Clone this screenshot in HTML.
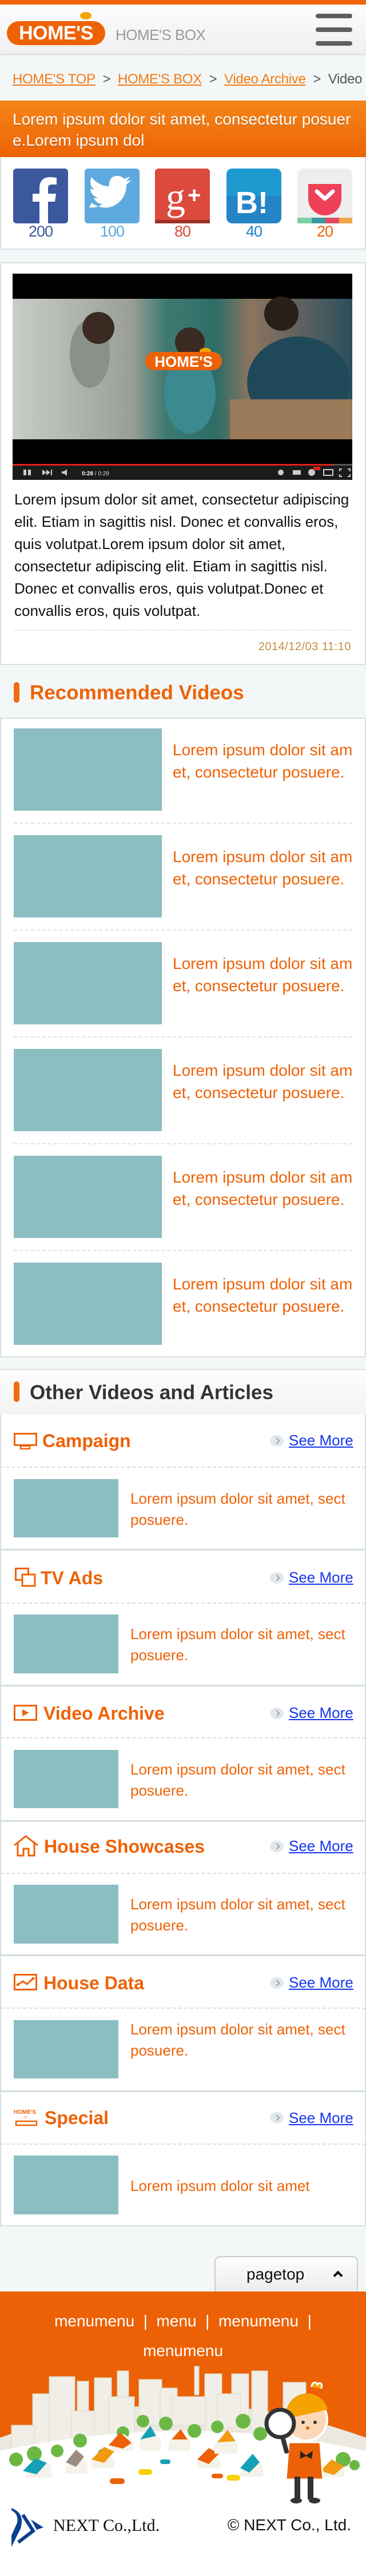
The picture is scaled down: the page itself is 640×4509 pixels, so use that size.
<!DOCTYPE html>
<html><head><meta charset="utf-8">
<style>
*{margin:0;padding:0;box-sizing:border-box}
body{width:640px;height:4509px;position:relative;background:#f4f7f8;font-family:"Liberation Sans",Arial,sans-serif;overflow:hidden}
.a{position:absolute}
.box{position:absolute;left:0;width:640px;background:#fff;border:2px solid #d8e0e3}
.thumb{position:absolute;background:#8bbec1}
.rt{position:absolute;left:302px;color:#ee6207;font-size:28px;line-height:39px;white-space:nowrap}
.ct{position:absolute;left:228px;color:#ee6207;font-size:26px;line-height:37px;white-space:nowrap}
.dash{position:absolute;left:24px;width:592px;border-top:2px dashed #dde3e5}
.dash2{position:absolute;left:0;width:640px;border-top:2px dashed #d6dfe2}
.sol{position:absolute;left:0;width:640px;border-top:3px solid #d3dde0}
.cat{position:absolute;left:24px;color:#ee6207;font-weight:bold;font-size:32px;line-height:40px;white-space:nowrap}
.see{position:absolute;left:505px;color:#1636f0;font-size:26px;line-height:30px;text-decoration:underline}
.arr{position:absolute;left:472px;width:24px;height:20px;border-radius:50%;background:#e1e8ee}
.arr:after{content:"";position:absolute;left:8px;top:6px;width:6px;height:6px;border-top:2px solid #9aa4ab;border-right:2px solid #9aa4ab;transform:rotate(45deg)}
.cnt{position:absolute;top:390px;width:96px;text-align:center;font-size:27px;letter-spacing:-1px}
</style></head><body>
<!-- top bar -->
<div class="a" style="left:0;top:0;width:640px;height:8px;background:#ef6207"></div>
<div class="a" style="left:0;top:8px;width:640px;height:89px;background:linear-gradient(#fdfdfd,#efefef);border-bottom:3px solid #dfe3e5"></div>
<div class="a" style="left:140px;top:21px;width:20px;height:13px;border-radius:50%;background:#f5a300"></div>
<div class="a" style="left:12px;top:37px;width:172px;height:42px;border-radius:22px;background:#ee6207;color:#fff;font-weight:bold;font-size:34px;line-height:42px;text-align:center;letter-spacing:-0.5px">HOME'S</div>
<div class="a" style="left:202px;top:45px;font-size:26px;color:#9a9a9a;letter-spacing:-0.5px;line-height:32px">HOME'S BOX</div>
<div class="a" style="left:552px;top:24px;width:64px;height:8px;border-radius:4px;background:#5e5e5e"></div>
<div class="a" style="left:552px;top:48px;width:64px;height:8px;border-radius:4px;background:#5e5e5e"></div>
<div class="a" style="left:552px;top:72px;width:64px;height:8px;border-radius:4px;background:#5e5e5e"></div>
<!-- breadcrumb -->
<div class="a" style="left:22px;top:124px;font-size:24px;line-height:30px;white-space:nowrap;color:#555;letter-spacing:-0.3px">
<span style="color:#f47a12;text-decoration:underline">HOME'S TOP</span>&nbsp; &gt; &nbsp;<span style="color:#f47a12;text-decoration:underline">HOME'S BOX</span>&nbsp; &gt; &nbsp;<span style="color:#f47a12;text-decoration:underline">Video Archive</span>&nbsp; &gt; &nbsp;Video</div>
<!-- banner -->
<div class="a" style="left:0;top:176px;width:640px;height:99px;background:linear-gradient(#f58618,#ec6305);color:#fff;font-size:28px;line-height:37px;padding:14px 0 0 22px;text-shadow:0 1px 1px rgba(0,0,0,.3);white-space:nowrap">Lorem ipsum dolor sit amet, consectetur posuer<br>e.Lorem ipsum dol</div>
<!-- social -->
<div class="box" style="top:275px;height:162px;border-top:none"></div>
<svg class="a" style="left:0;top:295px" width="640" height="100">
<rect x="23" y="0" width="96" height="96" rx="6" fill="#3b579d"/>
<path d="M84 96V58h12l2-14H84v-9c0-4 1-7 7-7h8V16c-2 0-7-1-12-1-11 0-18 7-18 19v10H57v14h12v38z" fill="#fff"/>
<rect x="148" y="0" width="96" height="96" rx="6" fill="#5ea9dd"/>
<path d="M160 60c8 6 20 10 30 8 20-4 32-22 31-40 3-2 6-5 8-8-3 1-6 2-9 2 3-2 6-5 7-8-3 2-6 3-10 4-6-7-18-7-23 0-3 4-4 9-3 13-13 0-24-7-31-16-4 8-2 17 5 22-3 0-5-1-7-2 0 8 6 14 13 16-2 1-5 1-7 0 2 6 8 11 15 11-6 5-14 7-23 6z" fill="#fff"/>
<rect x="271" y="0" width="96" height="96" rx="6" fill="#dc4a3d"/><rect x="271" y="90" width="96" height="6" fill="#9c2f26"/>
<text x="290" y="72" font-family="Liberation Serif,serif" font-size="68" fill="#fff">g</text>
<text x="328" y="60" font-family="Liberation Sans,sans-serif" font-size="40" font-weight="bold" fill="#fff">+</text>
<rect x="396" y="0" width="96" height="96" rx="10" fill="#2584c6"/><path d="M396 48V10a10 10 0 0 1 10-10h76a10 10 0 0 1 10 10v38z" fill="#1f9ad0"/>
<text x="412" y="78" font-family="Liberation Sans,sans-serif" font-size="54" font-weight="bold" fill="#fff">B!</text>
<rect x="520" y="0" width="96" height="96" rx="10" fill="#eeeeee"/>
<rect x="520" y="86" width="25" height="10" fill="#7fd0a6"/><rect x="545" y="86" width="24" height="10" fill="#3a9aa0"/><rect x="569" y="86" width="24" height="10" fill="#e54960"/><rect x="593" y="86" width="23" height="10" fill="#efa845"/>
<path d="M539 27h58v26a29 29 0 0 1-58 0z" fill="#ee4056"/>
<path d="M554 40l14 13 14-13" stroke="#fff" stroke-width="7" fill="none" stroke-linecap="round" stroke-linejoin="round"/>
</svg>
<div class="cnt" style="left:23px;color:#3b579d">200</div>
<div class="cnt" style="left:148px;color:#5ea9dd">100</div>
<div class="cnt" style="left:271px;color:#dc4a3d">80</div>
<div class="cnt" style="left:396px;color:#2584c6">40</div>
<div class="cnt" style="left:520px;color:#ee6207">20</div>
<!-- video box -->
<div class="box" style="top:459px;height:705px"></div>
<svg class="a" style="left:22px;top:479px" width="594" height="361">
<rect width="594" height="361" fill="#000"/>
<defs><linearGradient id="g1" x1="0" x2="1"><stop offset="0" stop-color="#c9cdc8"/><stop offset=".35" stop-color="#9a9f96"/><stop offset=".45" stop-color="#3f7a72"/><stop offset=".6" stop-color="#2d6d66"/><stop offset=".7" stop-color="#8d7460"/><stop offset="1" stop-color="#2c4f5c"/></linearGradient></defs>
<rect x="0" y="44" width="594" height="246" fill="url(#g1)"/>
<ellipse cx="135" cy="140" rx="35" ry="60" fill="#8a918a"/><circle cx="150" cy="95" r="28" fill="#3a2a22"/>
<ellipse cx="310" cy="210" rx="45" ry="70" fill="#3a8a90"/><circle cx="310" cy="120" r="26" fill="#3a2a22"/>
<ellipse cx="500" cy="190" rx="90" ry="80" fill="#1f4858"/><circle cx="470" cy="70" r="30" fill="#2a1e18"/>
<rect x="380" y="220" width="214" height="70" fill="#9a7a58"/>
<ellipse cx="337" cy="136" rx="10" ry="6" fill="#f5a300"/>
<rect x="232" y="137" width="134" height="32" rx="16" fill="#ee6207"/>
<text x="299" y="163" text-anchor="middle" font-family="Liberation Sans,sans-serif" font-weight="bold" font-size="26" fill="#fff">HOME'S</text>
<rect x="0" y="335" width="594" height="26" fill="#1b1b1b"/>
<rect x="0" y="333" width="560" height="3" fill="#e0201a"/><rect x="560" y="333" width="34" height="3" fill="#555"/>
<rect x="19" y="343" width="5" height="10" fill="#ccc"/><rect x="27" y="343" width="5" height="10" fill="#ccc"/>
<path d="M52 343l7 5-7 5zM59 343l7 5-7 5z" fill="#ccc"/><rect x="67" y="343" width="2" height="10" fill="#ccc"/>
<path d="M86 346h4l5-4v12l-5-4h-4z" fill="#ccc"/>
<text x="121" y="353" font-family="Liberation Sans,sans-serif" font-size="10" fill="#ddd"><tspan font-weight="bold" fill="#fff">0:28</tspan> / 0:29</text>
<circle cx="469" cy="348" r="5" fill="#ccc"/><rect x="490" y="344" width="14" height="8" fill="#ccc"/>
<circle cx="523" cy="348" r="6" fill="#ccc"/><rect x="526" y="338" width="12" height="6" fill="#e0201a"/>
<rect x="544" y="343" width="16" height="10" fill="none" stroke="#ccc" stroke-width="2"/>
<path d="M572 346v-4h4M586 342h4v4M590 351v4h-4M576 355h-4v-4" stroke="#ccc" stroke-width="2" fill="none"/>
</svg>
<div class="a" style="left:25px;top:855px;font-size:26px;line-height:39px;color:#111;white-space:nowrap">Lorem ipsum dolor sit amet, consectetur adipiscing<br>elit. Etiam in sagittis nisl. Donec et convallis eros,<br>quis volutpat.Lorem ipsum dolor sit amet,<br>consectetur adipiscing elit. Etiam in sagittis nisl.<br>Donec et convallis eros, quis volutpat.Donec et<br>convallis eros, quis volutpat.</div>
<div class="a" style="left:25px;top:1102px;width:590px;border-top:2px dotted #dedede"></div>
<div class="a" style="right:26px;top:1121px;font-size:20px;color:#c48a45;letter-spacing:0.5px">2014/12/03 11:10</div>
<!-- recommended -->
<div class="a" style="left:24px;top:1194px;width:10px;height:36px;border-radius:5px;background:#f26a12"></div>
<div class="a" style="left:52px;top:1191px;font-size:35px;font-weight:bold;color:#ee6207;line-height:44px">Recommended Videos</div>
<div class="box" style="top:1256px;height:1120px"></div>
<div class="thumb" style="left:24px;top:1275px;width:259px;height:144px"></div><div class="rt" style="top:1293px">Lorem ipsum dolor sit am<br>et, consectetur posuere.</div><div class="dash" style="top:1440px"></div>
<div class="thumb" style="left:24px;top:1462px;width:259px;height:144px"></div><div class="rt" style="top:1480px">Lorem ipsum dolor sit am<br>et, consectetur posuere.</div><div class="dash" style="top:1627px"></div>
<div class="thumb" style="left:24px;top:1649px;width:259px;height:144px"></div><div class="rt" style="top:1667px">Lorem ipsum dolor sit am<br>et, consectetur posuere.</div><div class="dash" style="top:1814px"></div>
<div class="thumb" style="left:24px;top:1836px;width:259px;height:144px"></div><div class="rt" style="top:1854px">Lorem ipsum dolor sit am<br>et, consectetur posuere.</div><div class="dash" style="top:2001px"></div>
<div class="thumb" style="left:24px;top:2023px;width:259px;height:144px"></div><div class="rt" style="top:2041px">Lorem ipsum dolor sit am<br>et, consectetur posuere.</div><div class="dash" style="top:2188px"></div>
<div class="thumb" style="left:24px;top:2210px;width:259px;height:144px"></div><div class="rt" style="top:2228px">Lorem ipsum dolor sit am<br>et, consectetur posuere.</div>
<!-- other -->
<div class="a" style="left:0;top:2396px;width:640px;height:80px;background:linear-gradient(#fdfdfd,#f3f3f3);border-top:2px solid #d8e0e3"></div>
<div class="a" style="left:24px;top:2418px;width:10px;height:36px;border-radius:5px;background:#f26a12"></div>
<div class="a" style="left:52px;top:2416px;font-size:35px;font-weight:bold;color:#333;line-height:44px">Other Videos and Articles</div>
<div class="box" style="top:2476px;height:1421px;border-top:none"></div>

<!-- section template offsets: start S, header center S+46, dashed S+91, thumb S+113 -->
<!-- Campaign S=2476 -->
<svg class="a" style="left:24px;top:2508px" width="42" height="30"><rect x="1.5" y="1.5" width="38" height="20" fill="none" stroke="#ee6207" stroke-width="3"/><rect x="12" y="23" width="16" height="5" fill="none" stroke="#ee6207" stroke-width="2.5"/></svg>
<div class="cat" style="left:74px;top:2502px">Campaign</div>
<div class="arr" style="top:2512px"></div><div class="see" style="top:2506px">See More</div>
<div class="dash2" style="top:2567px"></div>
<div class="thumb" style="left:24px;top:2589px;width:183px;height:102px"></div>
<div class="ct" style="top:2605px">Lorem ipsum dolor sit amet, sect<br>posuere.</div>
<div class="sol" style="top:2711px"></div>
<!-- TV Ads S=2712 -->
<svg class="a" style="left:26px;top:2744px" width="40" height="36"><rect x="1.5" y="1.5" width="22" height="20" fill="none" stroke="#ee6207" stroke-width="3"/><rect x="13" y="12" width="22" height="20" fill="#fff" stroke="#ee6207" stroke-width="3"/></svg>
<div class="cat" style="left:71px;top:2742px">TV Ads</div>
<div class="arr" style="top:2752px"></div><div class="see" style="top:2746px">See More</div>
<div class="dash2" style="top:2805px"></div>
<div class="thumb" style="left:24px;top:2826px;width:183px;height:103px"></div>
<div class="ct" style="top:2842px">Lorem ipsum dolor sit amet, sect<br>posuere.</div>
<div class="sol" style="top:2949px"></div>
<!-- Video Archive S=2950 -->
<svg class="a" style="left:24px;top:2984px" width="44" height="30"><rect x="1.5" y="1.5" width="38" height="25" fill="none" stroke="#ee6207" stroke-width="3"/><path d="M15 8l12 6-12 6z" fill="#ee6207"/></svg>
<div class="cat" style="left:76px;top:2979px">Video Archive</div>
<div class="arr" style="top:2989px"></div><div class="see" style="top:2983px">See More</div>
<div class="dash2" style="top:3041px"></div>
<div class="thumb" style="left:24px;top:3063px;width:183px;height:102px"></div>
<div class="ct" style="top:3079px">Lorem ipsum dolor sit amet, sect<br>posuere.</div>
<div class="sol" style="top:3186px"></div>
<!-- House Showcases S=3187 -->
<svg class="a" style="left:23px;top:3211px" width="46" height="40"><path d="M2 19L22 3l21 16M8 15v22h10V25h9v12h10V15" fill="none" stroke="#ee6207" stroke-width="3"/></svg>
<div class="cat" style="left:77px;top:3212px">House Showcases</div>
<div class="arr" style="top:3222px"></div><div class="see" style="top:3216px">See More</div>
<div class="dash2" style="top:3278px"></div>
<div class="thumb" style="left:24px;top:3299px;width:183px;height:103px"></div>
<div class="ct" style="top:3315px">Lorem ipsum dolor sit amet, sect<br>posuere.</div>
<div class="sol" style="top:3421px"></div>
<!-- House Data S=3422 -->
<svg class="a" style="left:24px;top:3455px" width="44" height="32"><rect x="1.5" y="1.5" width="38" height="26" fill="none" stroke="#ee6207" stroke-width="3"/><path d="M7 19l9-6 7 5 11-10" fill="none" stroke="#ee6207" stroke-width="3"/><circle cx="7" cy="19" r="2.5" fill="#ee6207"/><circle cx="34" cy="8" r="2.5" fill="#ee6207"/></svg>
<div class="cat" style="left:76px;top:3451px">House Data</div>
<div class="arr" style="top:3461px"></div><div class="see" style="top:3455px">See More</div>
<div class="dash2" style="top:3514px"></div>
<div class="thumb" style="left:24px;top:3536px;width:183px;height:102px"></div>
<div class="ct" style="top:3534px">Lorem ipsum dolor sit amet, sect<br>posuere.</div>
<div class="sol" style="top:3659px"></div>
<!-- Special S=3660 -->
<svg class="a" style="left:24px;top:3690px" width="48" height="36"><text x="0" y="10" font-family="Liberation Sans,sans-serif" font-weight="bold" font-size="10" fill="#ee6207">HOME'S</text><text x="18" y="19" font-family="Liberation Sans,sans-serif" font-size="9" fill="#ee6207">×</text><rect x="4" y="23" width="36" height="7" fill="none" stroke="#ee6207" stroke-width="2.5"/></svg>
<div class="cat" style="left:78px;top:3687px">Special</div>
<div class="arr" style="top:3697px"></div><div class="see" style="top:3692px">See More</div>
<div class="dash2" style="top:3752px"></div>
<div class="thumb" style="left:24px;top:3773px;width:183px;height:103px"></div>
<div class="ct" style="top:3808px">Lorem ipsum dolor sit amet</div>

<!-- pagetop -->
<div class="a" style="left:375px;top:3949px;width:251px;height:64px;border:2px solid #c9cdd0;border-bottom:none;border-radius:10px 10px 0 0;background:linear-gradient(#fdfdfd,#ececec)"></div>
<div class="a" style="left:431px;top:3965px;font-size:28px;color:#111">pagetop</div>
<div class="a" style="left:585px;top:3977px;width:12px;height:12px;border-top:4px solid #111;border-left:4px solid #111;transform:rotate(45deg)"></div>
<!-- footer -->
<div class="a" style="left:0;top:4011px;width:640px;height:498px;background:#fff"></div>
<div class="a" style="left:0;top:4011px;width:640px;height:260px;background:#ec6105"></div>
<div class="a" style="left:0;top:4037px;width:640px;text-align:center;color:#fff;font-size:28px;line-height:52px">menumenu &nbsp;| &nbsp;menu &nbsp;| &nbsp;menumenu &nbsp;|<br>menumenu</div>
<svg class="a" style="left:0;top:4130px" width="640" height="260">
<path d="M0 137 Q320 20 640 137 V260 H0z" fill="#ece9e0"/>
<g fill="#f0eee6" stroke="#dcd8cc" stroke-width="1">
<rect x="57" y="60" width="30" height="90"/><rect x="86" y="30" width="45" height="120"/><rect x="135" y="38" width="20" height="100"/><rect x="165" y="32" width="30" height="110"/><rect x="205" y="20" width="20" height="90"/><rect x="243" y="35" width="40" height="80"/><rect x="280" y="50" width="30" height="60"/><rect x="340" y="12" width="8" height="50"/><rect x="358" y="25" width="30" height="110"/><rect x="405" y="25" width="30" height="100"/><rect x="440" y="20" width="28" height="110"/><rect x="495" y="40" width="40" height="90"/><rect x="20" y="115" width="40" height="40"/><rect x="125" y="90" width="40" height="60"/><rect x="190" y="65" width="45" height="70"/><rect x="300" y="65" width="60" height="50"/><rect x="380" y="60" width="40" height="60"/>
</g>
<path d="M0 160 Q320 90 640 160 V260 H0z" fill="#fff"/>
<g fill="#6cb845"><circle cx="28" cy="175" r="12"/><circle cx="60" cy="165" r="13"/><circle cx="100" cy="160" r="11"/><circle cx="140" cy="142" r="12"/><circle cx="215" cy="128" r="11"/><circle cx="250" cy="108" r="11"/><circle cx="290" cy="112" r="12"/><circle cx="340" cy="125" r="12"/><circle cx="380" cy="118" r="11"/><circle cx="425" cy="108" r="13"/><circle cx="455" cy="130" r="12"/><circle cx="600" cy="175" r="13"/><circle cx="620" cy="185" r="9"/><circle cx="180" cy="165" r="9"/></g>
<g><path d="M45 195l20-20 25 10v22H45z" fill="#f5f2ea"/><path d="M40 195l22-22 20 8-18 20z" fill="#16a0b6"/>
<path d="M115 190l18-25 20 15v20h-38z" fill="#f5f2ea"/><path d="M115 180l18-22 14 12-14 18z" fill="#9b8b80"/>
<path d="M160 180l20-20 20 15v15h-40z" fill="#f5f2ea"/><path d="M160 175l22-22 18 8-18 20z" fill="#f39a12"/>
<path d="M195 150l20-20 18 10v20h-38z" fill="#f5f2ea"/><path d="M190 150l20-22 20 18-15 10z" fill="#ec6105"/>
<path d="M245 140l18-20 18 20v20h-36z" fill="#f5f2ea"/><path d="M245 140l18-24 10 18z" fill="#16a0b6"/>
<path d="M295 145l20-18 18 15v18h-38z" fill="#f5f2ea"/><path d="M300 140l16-18 12 18z" fill="#ec6105"/>
<path d="M345 180l20-20 20 15v15h-40z" fill="#f5f2ea"/><path d="M345 175l20-20 18 10-18 18z" fill="#ec6105"/>
<path d="M375 150l20-18 20 15v18h-40z" fill="#f5f2ea"/><path d="M380 145l18-22 14 20z" fill="#f39a12"/>
<path d="M420 200l20-25 20 10v20h-40z" fill="#f5f2ea"/><path d="M420 190l22-25 12 15-18 18z" fill="#16a0b6"/>
<path d="M560 200l20-20 22 10v15h-42z" fill="#f5f2ea"/><path d="M560 195l20-20 22 12-18 15z" fill="#f39a12"/></g>
<rect x="192" y="208" width="26" height="10" rx="5" fill="#ec6105"/><rect x="242" y="192" width="24" height="10" rx="5" fill="#f5d20a"/><rect x="280" y="175" width="18" height="8" rx="4" fill="#16a0b6"/><rect x="370" y="200" width="20" height="8" rx="4" fill="#ec6105"/><rect x="396" y="202" width="24" height="10" rx="5" fill="#f5d20a"/>
<!-- character -->
<path d="M505 145h55l5 65h-65z" fill="#ec6105" stroke="#fff" stroke-width="3"/>
<rect x="515" y="205" width="10" height="40" fill="#333"/><rect x="538" y="205" width="10" height="40" fill="#333"/>
<ellipse cx="518" cy="247" rx="10" ry="5" fill="#333"/><ellipse cx="550" cy="247" rx="10" ry="5" fill="#333"/>
<circle cx="535" cy="105" r="37" fill="#fcd8b8" stroke="#fff" stroke-width="4"/>
<path d="M500 98a37 37 0 0 1 73-10l-70 15z" fill="#f5a300"/><path d="M545 48c0-10 10-10 10-2c0-8 12-5 6 5" fill="#f5a300" stroke="#fff" stroke-width="3"/>
<circle cx="530" cy="110" r="3" fill="#333"/><circle cx="551" cy="110" r="3" fill="#333"/><circle cx="538" cy="120" r="3" fill="#ec6105"/>
<path d="M525 160l10 8 12-8-2 14-10-5-10 5z" fill="#222"/>
<circle cx="490" cy="112" r="24" fill="#fff" stroke="#333" stroke-width="7"/><rect x="494" y="135" width="8" height="30" rx="3" fill="#333" transform="rotate(-15 498 150)"/>
</svg>
<!-- bottom logos -->
<svg class="a" style="left:20px;top:4390px" width="60" height="70"><path d="M0 0c14 6 22 14 16 36L0 68V48l10-22C12 15 8 8 0 4z" fill="#0b3f8f"/><path d="M20 12l18 28L12 60" fill="none" stroke="#0b3f8f" stroke-width="6"/><path d="M34 20l22 14-12 4z" fill="#0b3f8f"/></svg>
<div class="a" style="left:93px;top:4404px;font-family:'Liberation Serif',serif;font-size:30px;color:#111;white-space:nowrap">NEXT Co.,Ltd.</div>
<div class="a" style="right:26px;top:4404px;font-size:28px;color:#111;white-space:nowrap">© NEXT Co., Ltd.</div>
</body></html>
